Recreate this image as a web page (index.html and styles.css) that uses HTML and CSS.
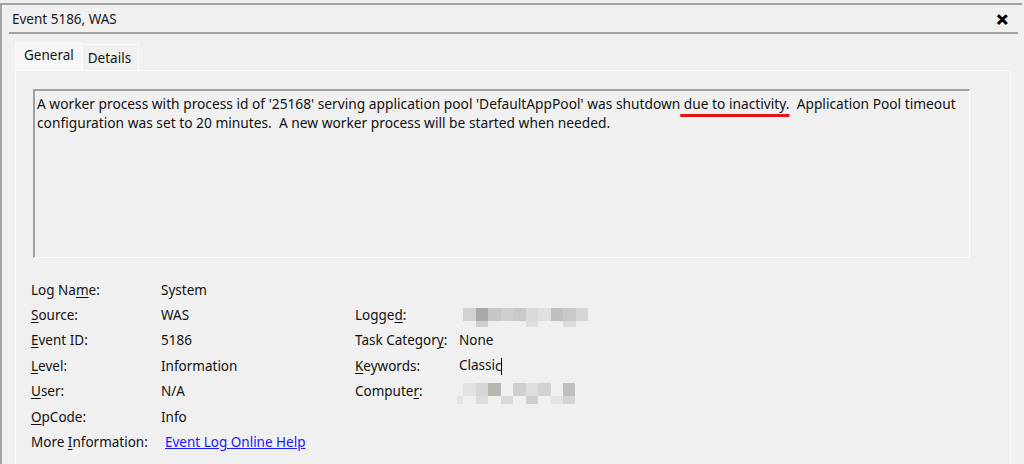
FILE: index.html
```html
<!DOCTYPE html>
<html>
<head>
<meta charset="utf-8">
<link rel="stylesheet" href="styles.css">
</head>
<body>
<div class="window">
  <div class="titlebar">
    <span class="title">Event 5186, WAS</span>
    <span class="close">&#x2715;</span>
  </div>
  <div class="separator"></div>
  <div class="tabs">
    <div class="tab active">General</div>
    <div class="tab">Details</div>
  </div>
  <div class="panel">
    <div class="desc">A worker process with process id of '25168' serving application pool 'DefaultAppPool' was shutdown<span class="mark"> due to inactivity.</span>&nbsp; Application Pool timeout<br>configuration was set to 20 minutes.&nbsp; A new worker process will be started when needed.</div>
    <div class="props">
      <div class="lbl">Log Na<u>m</u>e:</div><div class="val">System</div><div class="lbl2"></div><div class="val2"></div>
      <div class="lbl"><u>S</u>ource:</div><div class="val">WAS</div><div class="lbl2">Logge<u>d</u>:</div>
      <div class="val2">
        <svg class="mosaic" width="130" height="20" viewBox="0 0 130 20">
          <rect x="0" y="0" width="13" height="13" fill="#d2d2d2"/>
          <rect x="13" y="0" width="12" height="13" fill="#a9a9a9"/>
          <rect x="25" y="0" width="13" height="13" fill="#c6c6c6"/>
          <rect x="38" y="0" width="12" height="13" fill="#cfcfcf"/>
          <rect x="50" y="0" width="13" height="13" fill="#c9c9c9"/>
          <rect x="63" y="0" width="12" height="13" fill="#d9d9d9"/>
          <rect x="75" y="0" width="13" height="13" fill="#e0e0e0"/>
          <rect x="88" y="0" width="12" height="13" fill="#bfbfbf"/>
          <rect x="100" y="0" width="13" height="13" fill="#c8c8c8"/>
          <rect x="113" y="0" width="12" height="13" fill="#d6d6d6"/>
          <rect x="13" y="13" width="12" height="6" fill="#cdcdcd"/>
          <rect x="63" y="13" width="12" height="6" fill="#dedede"/>
          <rect x="100" y="13" width="13" height="6" fill="#dcdcdc"/>
        </svg>
      </div>
      <div class="lbl"><u>E</u>vent ID:</div><div class="val">5186</div><div class="lbl2">Task Categor<u>y</u>:</div><div class="val2">None</div>
      <div class="lbl"><u>L</u>evel:</div><div class="val">Information</div><div class="lbl2"><u>K</u>eywords:</div><div class="val2">Classi<span class="lastc">c</span><span class="caret"></span></div>
      <div class="lbl"><u>U</u>ser:</div><div class="val">N/A</div><div class="lbl2">Compute<u>r</u>:</div>
      <div class="val2">
        <svg class="mosaic2" width="122" height="22" viewBox="0 0 122 22">
          <rect x="6" y="0" width="13" height="13" fill="#e2e2e2"/>
          <rect x="19" y="0" width="12" height="13" fill="#d6d6d6"/>
          <rect x="31" y="0" width="13" height="13" fill="#b9b5b3"/>
          <rect x="56" y="0" width="13" height="13" fill="#cfcfcf"/>
          <rect x="69" y="0" width="12" height="13" fill="#dedede"/>
          <rect x="81" y="0" width="13" height="13" fill="#d2d2d2"/>
          <rect x="106" y="0" width="12" height="13" fill="#bdc0c3"/>
          <rect x="0" y="13" width="6" height="8" fill="#e4e4e4"/>
          <rect x="19" y="13" width="12" height="8" fill="#dddddd"/>
          <rect x="44" y="13" width="12" height="8" fill="#d8d8d8"/>
          <rect x="69" y="13" width="12" height="8" fill="#cfcfcf"/>
          <rect x="94" y="13" width="12" height="8" fill="#e4e4e4"/>
          <rect x="106" y="13" width="12" height="8" fill="#d4d4d4"/>
        </svg>
      </div>
      <div class="lbl"><u>O</u>pCode:</div><div class="val">Info</div><div class="lbl2"></div><div class="val2"></div>
      <div class="lbl">More <u>I</u>nformation:</div><div class="val"><a class="link" href="#">Event Log Online Help</a></div><div class="lbl2"></div><div class="val2"></div>
    </div>
  </div>
</div>
</body>
</html>
```
FILE: styles.css
```css
html, body {
  margin: 0;
  padding: 0;
  background: #f0f0f0;
  width: 1024px;
  height: 464px;
  overflow: hidden;
}
body {
  font-family: "Noto Sans", "Open Sans", sans-serif;
  font-size: 13px;
  color: #111;
}
.window {
  margin-top: 3px;
  border-top: 2px solid #a3a3a3;
  border-left: 2px solid #a3a3a3;
  height: 470px;
  box-sizing: border-box;
  width: 1022px;
}
.titlebar {
  height: 27px;
  display: flex;
  align-items: center;
  justify-content: space-between;
  padding-left: 10px;
  padding-right: 13px;
}
.title {
  font-size: 13.5px;
  color: #1a1a1a;
}
.close {
  font-size: 15px;
  font-weight: 900;
  color: #000;
  -webkit-text-stroke: 0.8px #000;
}
.separator {
  margin: 0 4px 0 7px;
  border-top: 2px solid #a3a3a3;
}
.tabs {
  display: flex;
  align-items: flex-end;
  margin-left: 13px;
  margin-top: 8px;
  height: 28px;
}
.tab {
  height: 25px;
  padding: 0 7px 0 5px;
  display: flex;
  align-items: center;
  border: 1px solid #fafafa;
  border-bottom: none;
  border-left: none;
  background: #f0f0f0;
  font-size: 13.5px;
}
.tab.active {
  height: 28px;
  background: #f7f7f7;
  align-items: flex-start;
  padding: 3px 8px 0 8px;
  border-left: 1px solid #fafafa;
  box-sizing: border-box;
}
.panel {
  margin-left: 13px;
  width: 996px;
  height: 400px;
  box-sizing: border-box;
  border: 1px solid #fcfcfc;
  padding: 18px 0 0 17px;
}
.desc {
  width: 937px;
  height: 169px;
  box-sizing: border-box;
  border-top: 2px solid #a0a0a0;
  border-left: 2px solid #a0a0a0;
  border-right: 1px solid #fcfcfc;
  border-bottom: 1px solid #fcfcfc;
  padding: 3px 4px 0 2px;
  line-height: 19px;
  font-size: 13.76px;
}
.mark {
  text-decoration: underline;
  text-decoration-color: #e5121c;
  text-decoration-thickness: 3px;
  text-underline-offset: 5px;
  text-decoration-skip-ink: none;
}
.props {
  margin-top: 19px;
  margin-left: -2px;
  display: grid;
  grid-template-columns: 130px 194px 104px 1fr;
  grid-auto-rows: 25.4px;
  align-items: center;
  font-size: 13.5px;
}
.props u {
  text-underline-offset: 2px;
}
.mosaic {
  display: block;
  margin-left: 4px;
  margin-top: 6px;
}
.mosaic2 {
  display: block;
  margin-left: -2px;
  margin-top: 6px;
}
.lastc {
  display: inline-block;
  width: 6px;
  overflow: hidden;
  vertical-align: bottom;
}
.caret {
  display: inline-block;
  width: 1px;
  height: 17px;
  background: #000;
  vertical-align: middle;
}
.link {
  margin-left: 4px;
  color: #1a1aff;
  text-decoration: underline;
}
```
